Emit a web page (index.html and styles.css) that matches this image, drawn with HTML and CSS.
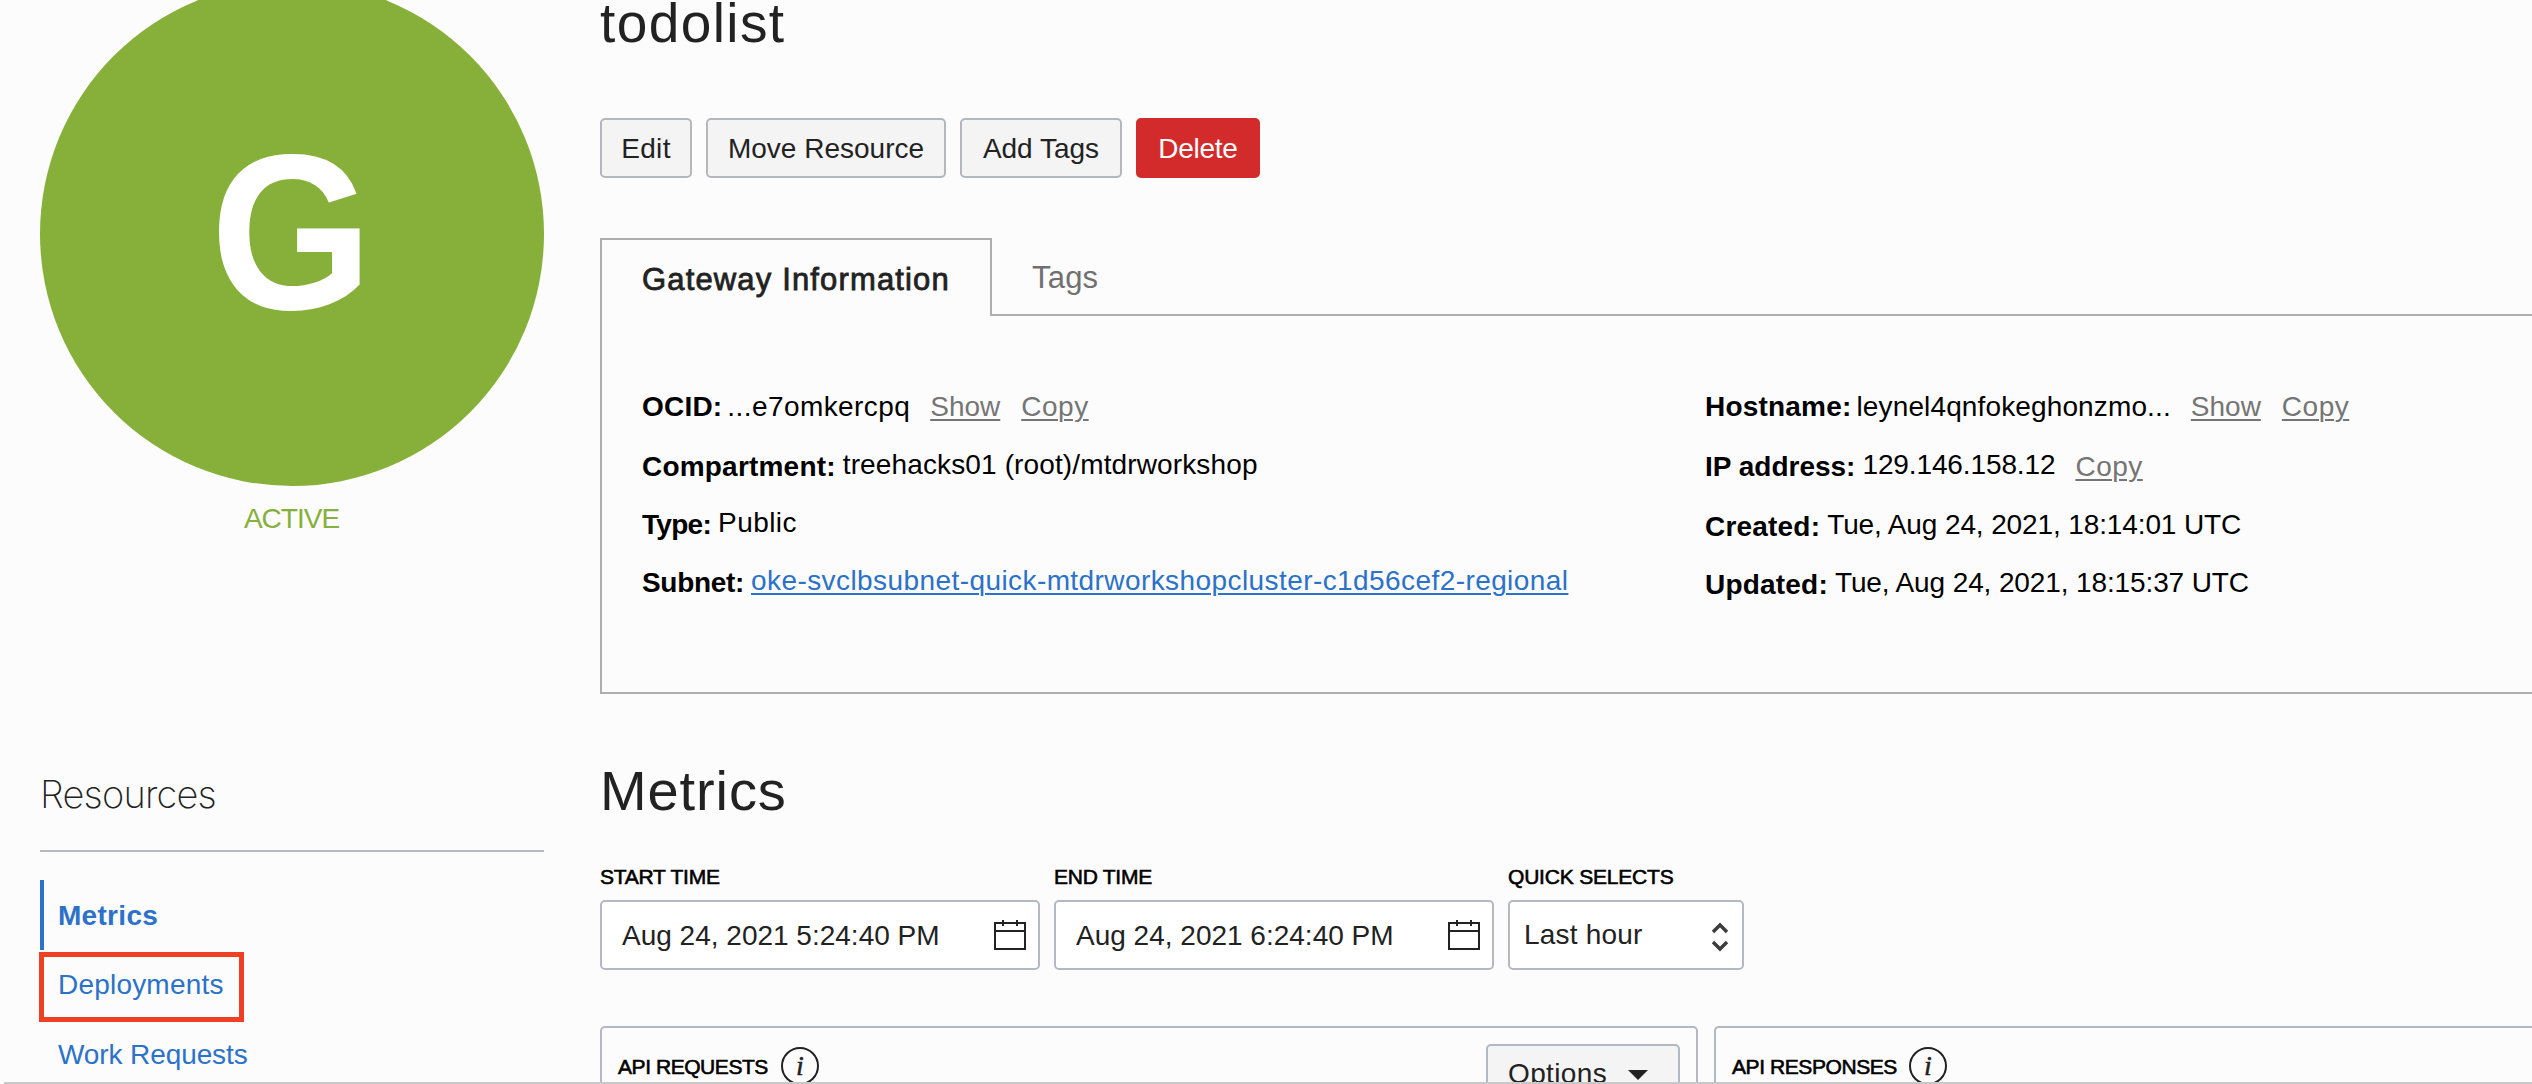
FILE: index.html
```html
<!DOCTYPE html>
<html lang="en">
<head>
<meta charset="utf-8">
<title>todolist</title>
<link rel="stylesheet" href="styles.css">
</head>
<body>
<div class="page">
  <aside class="sidebar">
    <div class="badge"><span class="badge-letter">G</span></div>
    <div class="status">ACTIVE</div>
    <h2 class="side-title">Resources</h2>
    <nav class="menu">
      <a class="item current">Metrics</a>
      <a class="item marked">Deployments</a>
      <a class="item work">Work Requests</a>
    </nav>
  </aside>
  <main class="main">
    <h1 class="title">todolist</h1>
    <div class="actions">
      <button class="btn edit">Edit</button>
      <button class="btn move">Move Resource</button>
      <button class="btn add">Add Tags</button>
      <button class="btn delete">Delete</button>
    </div>
    <div class="tabs">
      <div class="tab active">Gateway Information</div>
      <div class="tab">Tags</div>
    </div>
    <section class="panel">
      <dl class="details left">
        <div class="row"><dt class="k2">OCID:</dt><dd class="k4">...e7omkercpq</dd><a class="act">Show</a><a class="act copy">Copy</a></div>
        <div class="row low"><dt class="k2">Compartment:</dt><dd class="k1">treehacks01 (root)/mtdrworkshop</dd></div>
        <div class="row low"><dt class="type">Type:</dt><dd class="k4">Public</dd></div>
        <div class="row low"><dt class="n3">Subnet:</dt><dd class="k4"><a class="link">oke-svclbsubnet-quick-mtdrworkshopcluster-c1d56cef2-regional</a></dd></div>
      </dl>
      <dl class="details right">
        <div class="row"><dt class="k2">Hostname:</dt><dd class="k1">leynel4qnfokeghonzmo...</dd><a class="act">Show</a><a class="act copy">Copy</a></div>
        <div class="row low"><dt>IP address:</dt><dd class="n1">129.146.158.12</dd><a class="act copy">Copy</a></div>
        <div class="row low"><dt class="k2">Created:</dt><dd class="n1">Tue, Aug 24, 2021, 18:14:01 UTC</dd></div>
        <div class="row low"><dt class="k2">Updated:</dt><dd class="n1">Tue, Aug 24, 2021, 18:15:37 UTC</dd></div>
      </dl>
    </section>
    <h2 class="heading">Metrics</h2>
    <div class="filters">
      <div class="field date">
        <label class="caption">START TIME</label>
        <div class="input"><span>Aug 24, 2021 5:24:40 PM</span>
          <svg class="calendar" width="32" height="30" viewBox="0 0 32 30"><path d="M1 3h30v26H1zM1 11h30M9 0v6M23 0v6" fill="none" stroke="#222" stroke-width="2"/></svg>
        </div>
      </div>
      <div class="field date">
        <label class="caption">END TIME</label>
        <div class="input"><span>Aug 24, 2021 6:24:40 PM</span>
          <svg class="calendar" width="32" height="30" viewBox="0 0 32 30"><path d="M1 3h30v26H1zM1 11h30M9 0v6M23 0v6" fill="none" stroke="#222" stroke-width="2"/></svg>
        </div>
      </div>
      <div class="field quick">
        <label class="caption">QUICK SELECTS</label>
        <div class="input"><span>Last hour</span>
          <svg class="chevrons" width="18" height="30" viewBox="0 0 18 30"><path d="M2 10l7-7 7 7M2 20l7 7 7-7" fill="none" stroke="#3c3c3c" stroke-width="3.4"/></svg>
        </div>
      </div>
    </div>
    <div class="cards">
      <section class="card">
        <h3 class="caption req">API REQUESTS</h3>
        <span class="info">i</span>
        <button class="options">Options<svg width="20" height="10" viewBox="0 0 20 10"><path d="M0 0h20L10 10z" fill="#222"/></svg></button>
      </section>
      <section class="card last">
        <h3 class="caption res">API RESPONSES</h3>
        <span class="info">i</span>
      </section>
    </div>
  </main>
</div>
<div class="page-edge"></div>
</body>
</html>
```
FILE: styles.css
```css
*, *::after { box-sizing: border-box; }

body {
  margin: 0;
  height: 1084px;
  overflow: hidden;
  position: relative;
  background: #fcfcfc;
  color: #222;
  font: 28px/40px "Liberation Sans", Arial, sans-serif;
}

h1, h2, h3, dl, dd { margin: 0; font-weight: 400; }

.page {
  display: flex;
  gap: 56px;
  height: 1084px;
  padding-left: 40px;
  overflow: hidden;
}

.sidebar { flex: none; width: 504px; }

.badge {
  display: flex;
  align-items: center;
  justify-content: center;
  width: 504px;
  height: 504px;
  margin-top: -18px;
  border-radius: 50%;
  background: #86b03a;
}

.badge-letter {
  color: #fff;
  font-size: 220px;
  font-weight: 700;
  line-height: 254px;
  margin-top: -2px;
  transform: scaleX(.946);
}

.status {
  margin-top: 13px;
  text-align: center;
  color: #86b03a;
  letter-spacing: -1px;
  text-indent: -1px;
}

.side-title {
  margin-top: 230px;
  padding-bottom: 31px;
  border-bottom: 2px solid #b4b8bd;
  font: 200 38px/50px Inter, sans-serif;
  letter-spacing: -.8px;
}

.menu { padding-top: 28px; }

.item {
  display: block;
  padding-left: 17px;
  line-height: 70px;
  color: #2b72c8;
}

.item.current {
  height: 70px;
  padding-left: 14px;
  border-left: 4px solid #2b72c8;
  line-height: 72px;
  font-weight: 700;
  letter-spacing: .3px;
}

.item.marked { position: relative; height: 68px; padding-left: 18px; letter-spacing: .2px; }

.item.marked::after {
  content: "";
  position: absolute;
  top: 2px;
  left: -1px;
  width: 205px;
  height: 70px;
  border: 5px solid #ef4023;
}

.item.work { height: 66px; margin-top: 2px; padding-left: 18px; letter-spacing: -.1px; }

.main { flex: 1; min-width: 0; }

.title {
  margin-top: -7px;
  font-size: 55px;
  line-height: 60px;
  letter-spacing: 1.4px;
}

.actions { display: flex; gap: 14px; margin-top: 65px; }

.btn {
  height: 60px;
  padding: 1px 0 0;
  border: 2px solid #b4b8bd;
  border-radius: 5px;
  background: #f4f4f4;
  color: #222;
  font: inherit;
}

.edit { width: 92px; letter-spacing: .3px; }
.move { width: 240px; }
.add { width: 162px; }
.delete { width: 124px; border-color: #d32b2b; background: #d32b2b; color: #fff; letter-spacing: -.27px; }

.tabs { display: flex; margin-top: 60px; }

.tab {
  flex: 1;
  height: 78px;
  padding-left: 40px;
  border-bottom: 2px solid #aeaeae;
  font-size: 31px;
  line-height: 79px;
  letter-spacing: .2px;
  color: #707070;
}

.tab.active {
  flex: none;
  width: 392px;
  border: 2px solid #aeaeae;
  border-bottom: 0;
  line-height: 79px;
  letter-spacing: 1.15px;
  color: #222;
  -webkit-text-stroke: .8px #222;
}

.panel {
  display: flex;
  height: 378px;
  padding: 71px 0 0 40px;
  border: solid #aeaeae;
  border-width: 0 0 2px 2px;
  color: #000;
}

.details.left { width: 1063px; }

.row { display: flex; margin-bottom: 18px; }
.row:first-child { margin-bottom: 20px; }
.right .row:nth-child(2) { margin-bottom: 20px; }
.row dt { margin-right: 7px; font-weight: 700; }
.row:first-child dt { margin-right: 5px; }
.row.low dd { margin-top: -2px; }

.k1 { letter-spacing: .13px; }
.k2 { letter-spacing: .2px; }
.k4 { letter-spacing: .42px; }
.n1 { letter-spacing: -.12px; }
.n3 { letter-spacing: -.31px; }
.type { letter-spacing: -.7px; }

.act {
  margin-left: 20px;
  color: #757575;
  text-decoration: underline;
  text-decoration-thickness: 2px;
  text-underline-offset: 3px;
}

.copy { letter-spacing: .5px; }
.act + .copy { margin-left: 21px; }

.link {
  color: #2b72c8;
  text-decoration: underline;
  text-decoration-thickness: 2px;
  text-underline-offset: 3px;
}

.heading {
  margin-top: 67px;
  font-size: 56px;
  line-height: 60px;
  letter-spacing: .9px;
}

.filters { display: flex; gap: 14px; margin-top: 41px; }

.caption {
  display: block;
  font-size: 21px;
  line-height: 30px;
  letter-spacing: -.25px;
  color: #000;
  -webkit-text-stroke: .6px #000;
}

.quick .caption { letter-spacing: -.2px; }

.input {
  display: flex;
  justify-content: space-between;
  height: 70px;
  margin-top: 8px;
  padding: 0 12px 0 20px;
  border: 2px solid #b4b8c0;
  border-radius: 5px;
  background: #fff;
  line-height: 68px;
}

.date { width: 440px; }
.quick { width: 236px; }
.quick .input { padding: 0 13px 0 14px; line-height: 66px; letter-spacing: .2px; }
.calendar { margin-top: 18px; }
.chevrons { margin-top: 20px; }

.cards { display: flex; gap: 16px; margin-top: 56px; }

.card {
  display: flex;
  width: 1098px;
  height: 160px;
  padding: 19px 16px 0;
  border: 2px solid #b4b8c0;
  border-radius: 5px;
}

.card.last {
  flex: 1;
  border-right: 0;
  border-radius: 5px 0 0 5px;
}

.card .caption { line-height: 39px; }
.caption.req { letter-spacing: -.44px; }
.caption.res { letter-spacing: -.42px; }

.info {
  width: 38px;
  height: 38px;
  margin-left: 13px;
  border: 2px solid #222;
  border-radius: 50%;
  text-align: center;
  font: italic 400 28px/33px "Liberation Serif", serif;
  -webkit-text-stroke: .5px #222;
}

.card.last .info { margin-left: 12px; }

.options {
  display: flex;
  align-items: flex-start;
  justify-content: space-between;
  width: 194px;
  height: 60px;
  margin: -3px 0 0 auto;
  padding: 8px 30px 0 20px;
  border: 2px solid #b4b8c0;
  border-radius: 5px;
  background: #f4f4f4;
  color: #222;
  font: inherit;
  letter-spacing: .38px;
}

.options svg { margin-top: 16px; }

.page-edge {
  position: absolute;
  left: 4px;
  right: 0;
  bottom: 0;
  height: 2px;
  background: #c8c8c8;
}
```
